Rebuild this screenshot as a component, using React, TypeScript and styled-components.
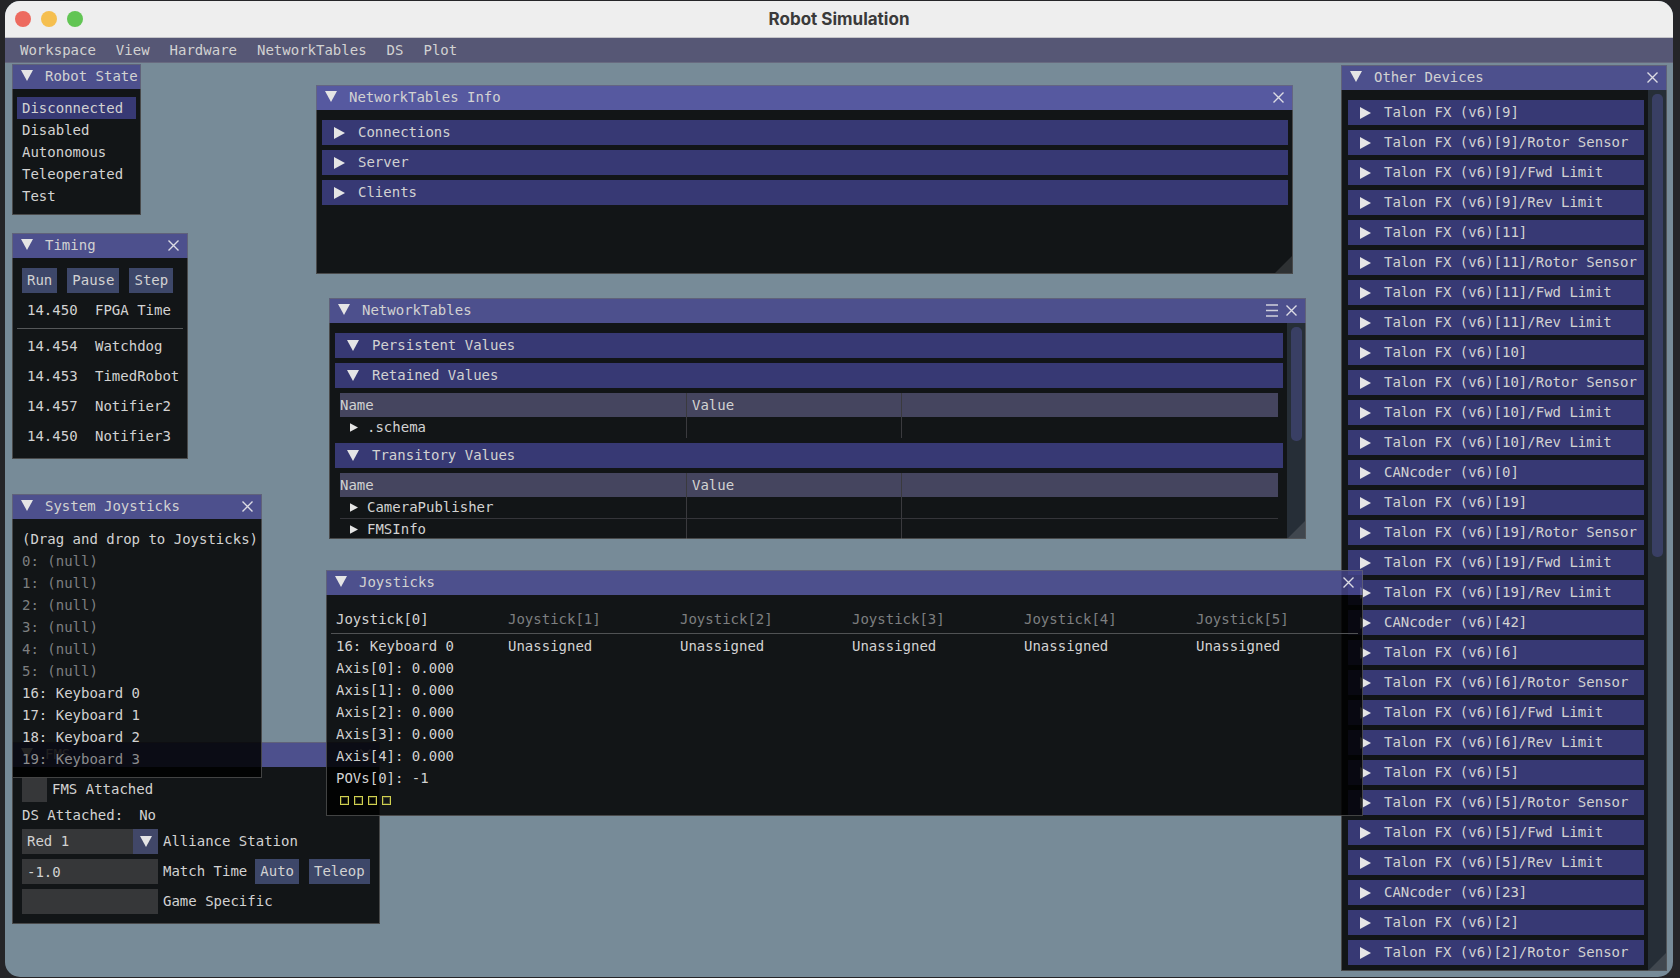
import React from "react";
import styled, { createGlobalStyle } from "styled-components";

const GlobalStyle = createGlobalStyle`
  * { box-sizing: border-box; }
  body {
    margin: 0;
    background: #252528;
    color: #d2d2d2;
    font: 14px/17px "DejaVu Sans Mono", "Liberation Mono", monospace;
  }
  button, input, select { font: inherit; color: inherit; margin: 0; border: 0; border-radius: 0; }
  button { background: none; padding: 0; cursor: pointer; }
  svg { flex: none; }
`;

/* ---------- application shell ---------- */

const Screen = styled.div`
  display: flex;
  height: 100vh;
  padding: 1px 7px 1px 5px;
`;

const AppFrame = styled.div`
  flex: 1;
  display: flex;
  flex-direction: column;
  min-width: 0;
  overflow: hidden;
  border-radius: 15px;
  background: #778b98;
`;

const MacTitleBar = styled.header`
  display: grid;
  grid-template-columns: 1fr auto 1fr;
  align-items: center;
  height: 37px;
  padding: 0 10px;
  background: #eeeeee;
  border-bottom: 1px solid #c4c4c8;
`;

const MacTitle = styled.h1`
  margin: 0;
  color: #3a3a3a;
  font: 700 17px/20px Inter, "Liberation Sans", sans-serif;
`;

const TrafficLights = styled.div`
  display: flex;
  gap: 10px;
`;

const Light = styled.button<{ $color: string }>`
  width: 16px;
  height: 16px;
  border-radius: 50%;
  background: ${(p) => p.$color};
`;

const MenuBar = styled.nav`
  display: flex;
  align-items: center;
  gap: 20px;
  height: 25px;
  padding: 0 15px;
  background: #565775;
  border-bottom: 1px solid #686a80;
`;

const MenuItem = styled.button`
  color: #d2d2d2;
`;

const Workspace = styled.main`
  position: relative;
  flex: 1;
  min-height: 0;
`;

/* ---------- floating windows ---------- */

type Place = {
  $top: number;
  $left?: number;
  $right?: number;
  $bottom?: number;
  $width: number;
  $height?: number;
};

const px = (name: string, v?: number) => (v === undefined ? "" : `${name}: ${v}px;`);

const Frame = styled.section<Place>`
  position: absolute;
  ${(p) => px("top", p.$top)}
  ${(p) => px("left", p.$left)}
  ${(p) => px("right", p.$right)}
  ${(p) => px("bottom", p.$bottom)}
  ${(p) => px("width", p.$width)}
  ${(p) => px("height", p.$height)}
  display: flex;
  flex-direction: column;
  overflow: hidden;

  &::after {
    content: "";
    position: absolute;
    inset: 0;
    border: 1px solid rgba(110, 110, 110, 0.6);
    pointer-events: none;
  }
`;

const FrameTitle = styled.div<{ $active?: boolean }>`
  display: flex;
  align-items: center;
  flex: none;
  height: 25px;
  padding: 0 9px;
  background: ${(p) => (p.$active ? "rgba(82, 82, 161, 0.87)" : "rgba(69, 69, 138, 0.83)")};
`;

const FrameName = styled.h2`
  flex: 1;
  margin: 0 0 0 12px;
  font: inherit;
  white-space: nowrap;
`;

const IconButton = styled.button`
  display: flex;
  margin-left: 8px;
`;

const FrameMain = styled.div`
  display: flex;
  flex: 1;
  min-height: 0;
  background: rgba(0, 0, 0, 0.85);
`;

const Body = styled.div<{ $pad: string; $gap?: number }>`
  display: flex;
  flex-direction: column;
  flex: 1;
  gap: ${(p) => p.$gap ?? 0}px;
  min-width: 0;
  padding: ${(p) => p.$pad};
  overflow: hidden;
`;

const ScrollTrack = styled.div`
  flex: none;
  width: 19px;
  padding: 4px;
  background: rgba(51, 64, 77, 0.6);
`;

const ScrollGrab = styled.div<{ $size: number }>`
  width: 11px;
  height: ${(p) => p.$size}%;
  border-radius: 5px;
  background: rgba(102, 102, 204, 0.3);
`;

const Grip = styled.svg`
  position: absolute;
  right: 1px;
  bottom: 1px;
`;

const DownArrow = () => (
  <svg width="12" height="11" viewBox="0 0 12 11" aria-hidden="true">
    <path d="M0 0H12L6 11Z" fill="#e5e5e5" />
  </svg>
);

const RightArrow = ({ small }: { small?: boolean }) => (
  <svg width={small ? 8 : 11} height={small ? 9 : 12} viewBox="0 0 11 12" aria-hidden="true">
    <path d="M0 0V12L11 6Z" fill="#e5e5e5" />
  </svg>
);

const Cross = () => (
  <svg width="11" height="11" viewBox="0 0 11 11" aria-hidden="true">
    <path d="M.5 .5L10.500 10.500M10.500 .5L.5 10.500" stroke="#dcdce4" strokeWidth="1.400" />
  </svg>
);

const Lines = () => (
  <svg width="12" height="13" viewBox="0 0 12 13" aria-hidden="true">
    <path d="M0 1H12M0 6.500H12M0 12H12" stroke="#cfcfdc" strokeWidth="1.500" />
  </svg>
);

type WindowProps = Place & {
  title: string;
  active?: boolean;
  closable?: boolean;
  menu?: boolean;
  scroll?: number;
  grip?: boolean;
  children: React.ReactNode;
};

function Window({ title, active, closable = true, menu, scroll, grip, children, ...place }: WindowProps) {
  return (
    <Frame {...place} aria-label={title}>
      <FrameTitle $active={active}>
        <button aria-label={`Collapse ${title}`}>
          <DownArrow />
        </button>
        <FrameName>{title}</FrameName>
        {menu && (
          <IconButton aria-label="Options">
            <Lines />
          </IconButton>
        )}
        {closable && (
          <IconButton aria-label={`Close ${title}`}>
            <Cross />
          </IconButton>
        )}
      </FrameTitle>
      <FrameMain>
        {children}
        {scroll && (
          <ScrollTrack>
            <ScrollGrab $size={scroll} />
          </ScrollTrack>
        )}
      </FrameMain>
      {grip && (
        <Grip width="17" height="17" aria-hidden="true">
          <path d="M17 0V17H0Z" fill="rgba(255,255,255,0.12)" />
        </Grip>
      )}
    </Frame>
  );
}

/* ---------- widgets ---------- */

const HeaderButton = styled.button`
  display: flex;
  align-items: center;
  flex: none;
  gap: 13px;
  height: 25px;
  padding: 0 0 0 12px;
  text-align: left;
  white-space: nowrap;
  background: rgba(102, 102, 230, 0.45);
`;

const PushButton = styled.button`
  height: 25px;
  padding: 0 5px;
  background: rgba(89, 102, 156, 0.62);
`;

const Selectable = styled.button<{ $selected?: boolean }>`
  height: 22px;
  padding: 0 5px;
  text-align: left;
  background: ${(p) => (p.$selected ? "rgba(102, 102, 230, 0.45)" : "none")};
`;

const TextLine = styled.div<{ $tone?: string }>`
  height: 22px;
  line-height: 22px;
  white-space: nowrap;
  color: ${(p) => p.$tone ?? "inherit"};
`;

const ButtonRow = styled.div`
  display: flex;
  gap: 10px;
  padding: 0 5px;
`;

const Divider = styled.hr`
  width: 100%;
  height: 1px;
  margin: 0;
  border: 0;
  background: #555759;
`;

const TimeTable = styled.table`
  border-collapse: collapse;
  margin-left: 10px;

  td, th {
    height: 30px;
    padding: 0 0 5px;
    font-weight: normal;
    text-align: left;
  }
  td { width: 68px; }
  tr:last-child td, tr:last-child th { height: 25px; padding: 0; }
`;

const TreeTable = styled.table`
  flex: none;
  table-layout: fixed;
  border-spacing: 0;
  margin: 0 5px;

  th, td {
    padding: 0 0 0 5px;
    font-weight: normal;
    text-align: left;
    border-right: 1px solid #3a3a3e;
  }
  th { height: 24px; background: #45455f; }
  td { height: 21px; }
  tr + tr td { height: 22px; border-top: 1px solid #35353a; }
  th:first-child { width: 347px; padding-left: 0; }
  th:nth-child(2) { width: 215px; }
  td:first-child { padding-left: 10px; }
  th:last-child, td:last-child { border-right: 0; }
`;

const TreeNode = styled.button`
  display: flex;
  align-items: center;
  gap: 9px;
`;

const StickTable = styled.table`
  width: 100%;
  table-layout: fixed;
  border-spacing: 0;

  th, td {
    padding: 1px 0 0 5px;
    font-weight: normal;
    text-align: left;
    vertical-align: top;
  }
  th {
    height: 29px;
    padding-top: 6px;
    color: #7d7f80;
    border-bottom: 1px solid #505254;
  }
  th:not(:last-child) { width: 172px; }
  th:first-child { color: #d2d2d2; }
`;

const PadButtons = styled.div`
  display: flex;
  align-items: center;
  gap: 5px;
  height: 22px;
  padding-left: 4px;
`;

const PadButton = styled.span`
  width: 9px;
  height: 9px;
  border: 1px solid #d0d050;
  outline: 1px solid rgba(208, 208, 80, 0.25);
  outline-offset: -2px;
`;

const FormRow = styled.div<{ $height?: number; $gap?: number }>`
  display: flex;
  align-items: center;
  flex: none;
  gap: ${(p) => p.$gap ?? 5}px;
  height: ${(p) => p.$height ?? 25}px;
  white-space: nowrap;
`;

const CheckBox = styled.input`
  appearance: none;
  width: 25px;
  height: 25px;
  background: rgba(110, 110, 110, 0.39);
`;

const Field = styled.input`
  width: 136px;
  height: 25px;
  padding: 0 5px;
  background: rgba(110, 110, 110, 0.39);
`;

const ComboBox = styled.div`
  display: grid;
  grid-template-columns: 111px 25px;
  width: 136px;
  height: 25px;
  background: rgba(110, 110, 110, 0.39);
`;

const Combo = styled.select`
  grid-area: 1 / 1 / 2 / 3;
  appearance: none;
  padding: 0 30px 0 5px;
  background: none;
`;

const ComboArrow = styled.span`
  grid-area: 1 / 2;
  display: flex;
  align-items: center;
  justify-content: center;
  background: #414768;
  pointer-events: none;
`;

const Actions = styled.div`
  display: flex;
  gap: 10px;
  margin-left: 3px;
`;

/* ---------- data ---------- */

const menus = ["Workspace", "View", "Hardware", "NetworkTables", "DS", "Plot"];
const robotStates = ["Disconnected", "Disabled", "Autonomous", "Teleoperated", "Test"];

const timers = [
  ["14.454", "Watchdog"],
  ["14.453", "TimedRobot"],
  ["14.457", "Notifier2"],
  ["14.450", "Notifier3"],
];

const talon = (id: number) =>
  ["", "/Rotor Sensor", "/Fwd Limit", "/Rev Limit"].map((part) => `Talon FX (v6)[${id}]${part}`);
const coder = (id: number) => `CANcoder (v6)[${id}]`;

const devices = [
  ...talon(9),
  ...talon(11),
  ...talon(10),
  coder(0),
  ...talon(19),
  coder(42),
  ...talon(6),
  ...talon(5),
  coder(23),
  ...talon(2).slice(0, 2),
];

const DIM = "#7d7f80";
const FADED = "#8c8c8e";

function ValueTable({ rows }: { rows: string[] }) {
  return (
    <TreeTable>
      <thead>
        <tr>
          <th>Name</th>
          <th>Value</th>
          <th aria-label="Details" />
        </tr>
      </thead>
      <tbody>
        {rows.map((row) => (
          <tr key={row}>
            <td>
              <TreeNode>
                <RightArrow small />
                {row}
              </TreeNode>
            </td>
            <td />
            <td />
          </tr>
        ))}
      </tbody>
    </TreeTable>
  );
}

export default function App() {
  return (
    <Screen>
      <GlobalStyle />
      <AppFrame>
        <MacTitleBar>
          <TrafficLights>
            <Light $color="#ed6a5f" aria-label="Close" />
            <Light $color="#f5bf4f" aria-label="Minimize" />
            <Light $color="#62c554" aria-label="Zoom" />
          </TrafficLights>
          <MacTitle>Robot Simulation</MacTitle>
        </MacTitleBar>
        <MenuBar>
          {menus.map((m) => (
            <MenuItem key={m}>{m}</MenuItem>
          ))}
        </MenuBar>

        <Workspace>
          <Window title="Robot State" closable={false} $top={1} $left={7} $width={129} $height={151}>
            <Body $pad="8px 5px">
              {robotStates.map((s, i) => (
                <Selectable key={s} $selected={i === 0}>
                  {s}
                </Selectable>
              ))}
            </Body>
          </Window>

          <Window title="Timing" $top={170} $left={7} $width={176} $height={226}>
            <Body $pad="10px 5px" $gap={5}>
              <ButtonRow>
                <PushButton>Run</PushButton>
                <PushButton>Pause</PushButton>
                <PushButton>Step</PushButton>
              </ButtonRow>
              <TimeTable>
                <tbody>
                  <tr>
                    <td>14.450</td>
                    <th scope="row">FPGA Time</th>
                  </tr>
                </tbody>
              </TimeTable>
              <Divider />
              <TimeTable>
                <tbody>
                  {timers.map(([time, name]) => (
                    <tr key={name}>
                      <td>{time}</td>
                      <th scope="row">{name}</th>
                    </tr>
                  ))}
                </tbody>
              </TimeTable>
            </Body>
          </Window>

          <Window title="FMS" $top={679} $left={7} $width={368} $height={182}>
            <Body $pad="10px" $gap={5}>
              <FormRow>
                <CheckBox type="checkbox" id="fms-attached" />
                <label htmlFor="fms-attached">FMS Attached</label>
              </FormRow>
              <FormRow $height={17} $gap={16}>
                <span>DS Attached:</span>
                <span>No</span>
              </FormRow>
              <FormRow>
                <ComboBox>
                  <Combo id="station" defaultValue="Red 1">
                    <option>Red 1</option>
                    <option>Red 2</option>
                    <option>Red 3</option>
                    <option>Blue 1</option>
                    <option>Blue 2</option>
                    <option>Blue 3</option>
                  </Combo>
                  <ComboArrow>
                    <DownArrow />
                  </ComboArrow>
                </ComboBox>
                <label htmlFor="station">Alliance Station</label>
              </FormRow>
              <FormRow>
                <Field id="match-time" defaultValue="-1.0" />
                <label htmlFor="match-time">Match Time</label>
                <Actions>
                  <PushButton>Auto</PushButton>
                  <PushButton>Teleop</PushButton>
                </Actions>
              </FormRow>
              <FormRow>
                <Field id="game-specific" />
                <label htmlFor="game-specific">Game Specific</label>
              </FormRow>
            </Body>
          </Window>

          <Window title="System Joysticks" $top={431} $left={7} $width={250} $height={284}>
            <Body $pad="9px 10px 8px">
              <TextLine>(Drag and drop to Joysticks)</TextLine>
              {[0, 1, 2, 3, 4, 5].map((n) => (
                <TextLine key={n} $tone={DIM}>{`${n}: (null)`}</TextLine>
              ))}
              {[0, 1, 2, 3].map((n) => (
                <TextLine key={n} $tone={n === 3 ? FADED : undefined}>{`${16 + n}: Keyboard ${n}`}</TextLine>
              ))}
            </Body>
          </Window>

          <Window title="Other Devices" scroll={53} grip $top={2} $right={6} $bottom={6} $width={326}>
            <Body $pad="10px 4px 0 7px" $gap={5}>
              {devices.map((d) => (
                <HeaderButton key={d}>
                  <RightArrow />
                  {d}
                </HeaderButton>
              ))}
            </Body>
          </Window>

          <Window title="NetworkTables Info" active grip $top={22} $left={311} $width={977} $height={189}>
            <Body $pad="10px 5px 10px 6px" $gap={5}>
              {["Connections", "Server", "Clients"].map((s) => (
                <HeaderButton key={s}>
                  <RightArrow />
                  {s}
                </HeaderButton>
              ))}
            </Body>
          </Window>

          <Window title="NetworkTables" menu scroll={55} grip $top={235} $left={324} $width={977} $height={241}>
            <Body $pad="10px 4px 0 6px" $gap={5}>
              <HeaderButton>
                <DownArrow />
                Persistent Values
              </HeaderButton>
              <HeaderButton>
                <DownArrow />
                Retained Values
              </HeaderButton>
              <ValueTable rows={[".schema"]} />
              <HeaderButton>
                <DownArrow />
                Transitory Values
              </HeaderButton>
              <ValueTable rows={["CameraPublisher", "FMSInfo"]} />
            </Body>
          </Window>

          <Window title="Joysticks" $top={507} $left={321} $width={1037} $height={246}>
            <Body $pad="10px 5px">
              <StickTable>
                <thead>
                  <tr>
                    {[0, 1, 2, 3, 4, 5].map((n) => (
                      <th key={n} scope="col">{`Joystick[${n}]`}</th>
                    ))}
                  </tr>
                </thead>
                <tbody>
                  <tr>
                    <td>
                      <TextLine>16: Keyboard 0</TextLine>
                      {[0, 1, 2, 3, 4].map((n) => (
                        <TextLine key={n}>{`Axis[${n}]: 0.000`}</TextLine>
                      ))}
                      <TextLine>POVs[0]: -1</TextLine>
                      <PadButtons>
                        {[0, 1, 2, 3].map((n) => (
                          <PadButton key={n} />
                        ))}
                      </PadButtons>
                    </td>
                    {[1, 2, 3, 4, 5].map((n) => (
                      <td key={n}>
                        <TextLine>Unassigned</TextLine>
                      </td>
                    ))}
                  </tr>
                </tbody>
              </StickTable>
            </Body>
          </Window>
        </Workspace>
      </AppFrame>
    </Screen>
  );
}
